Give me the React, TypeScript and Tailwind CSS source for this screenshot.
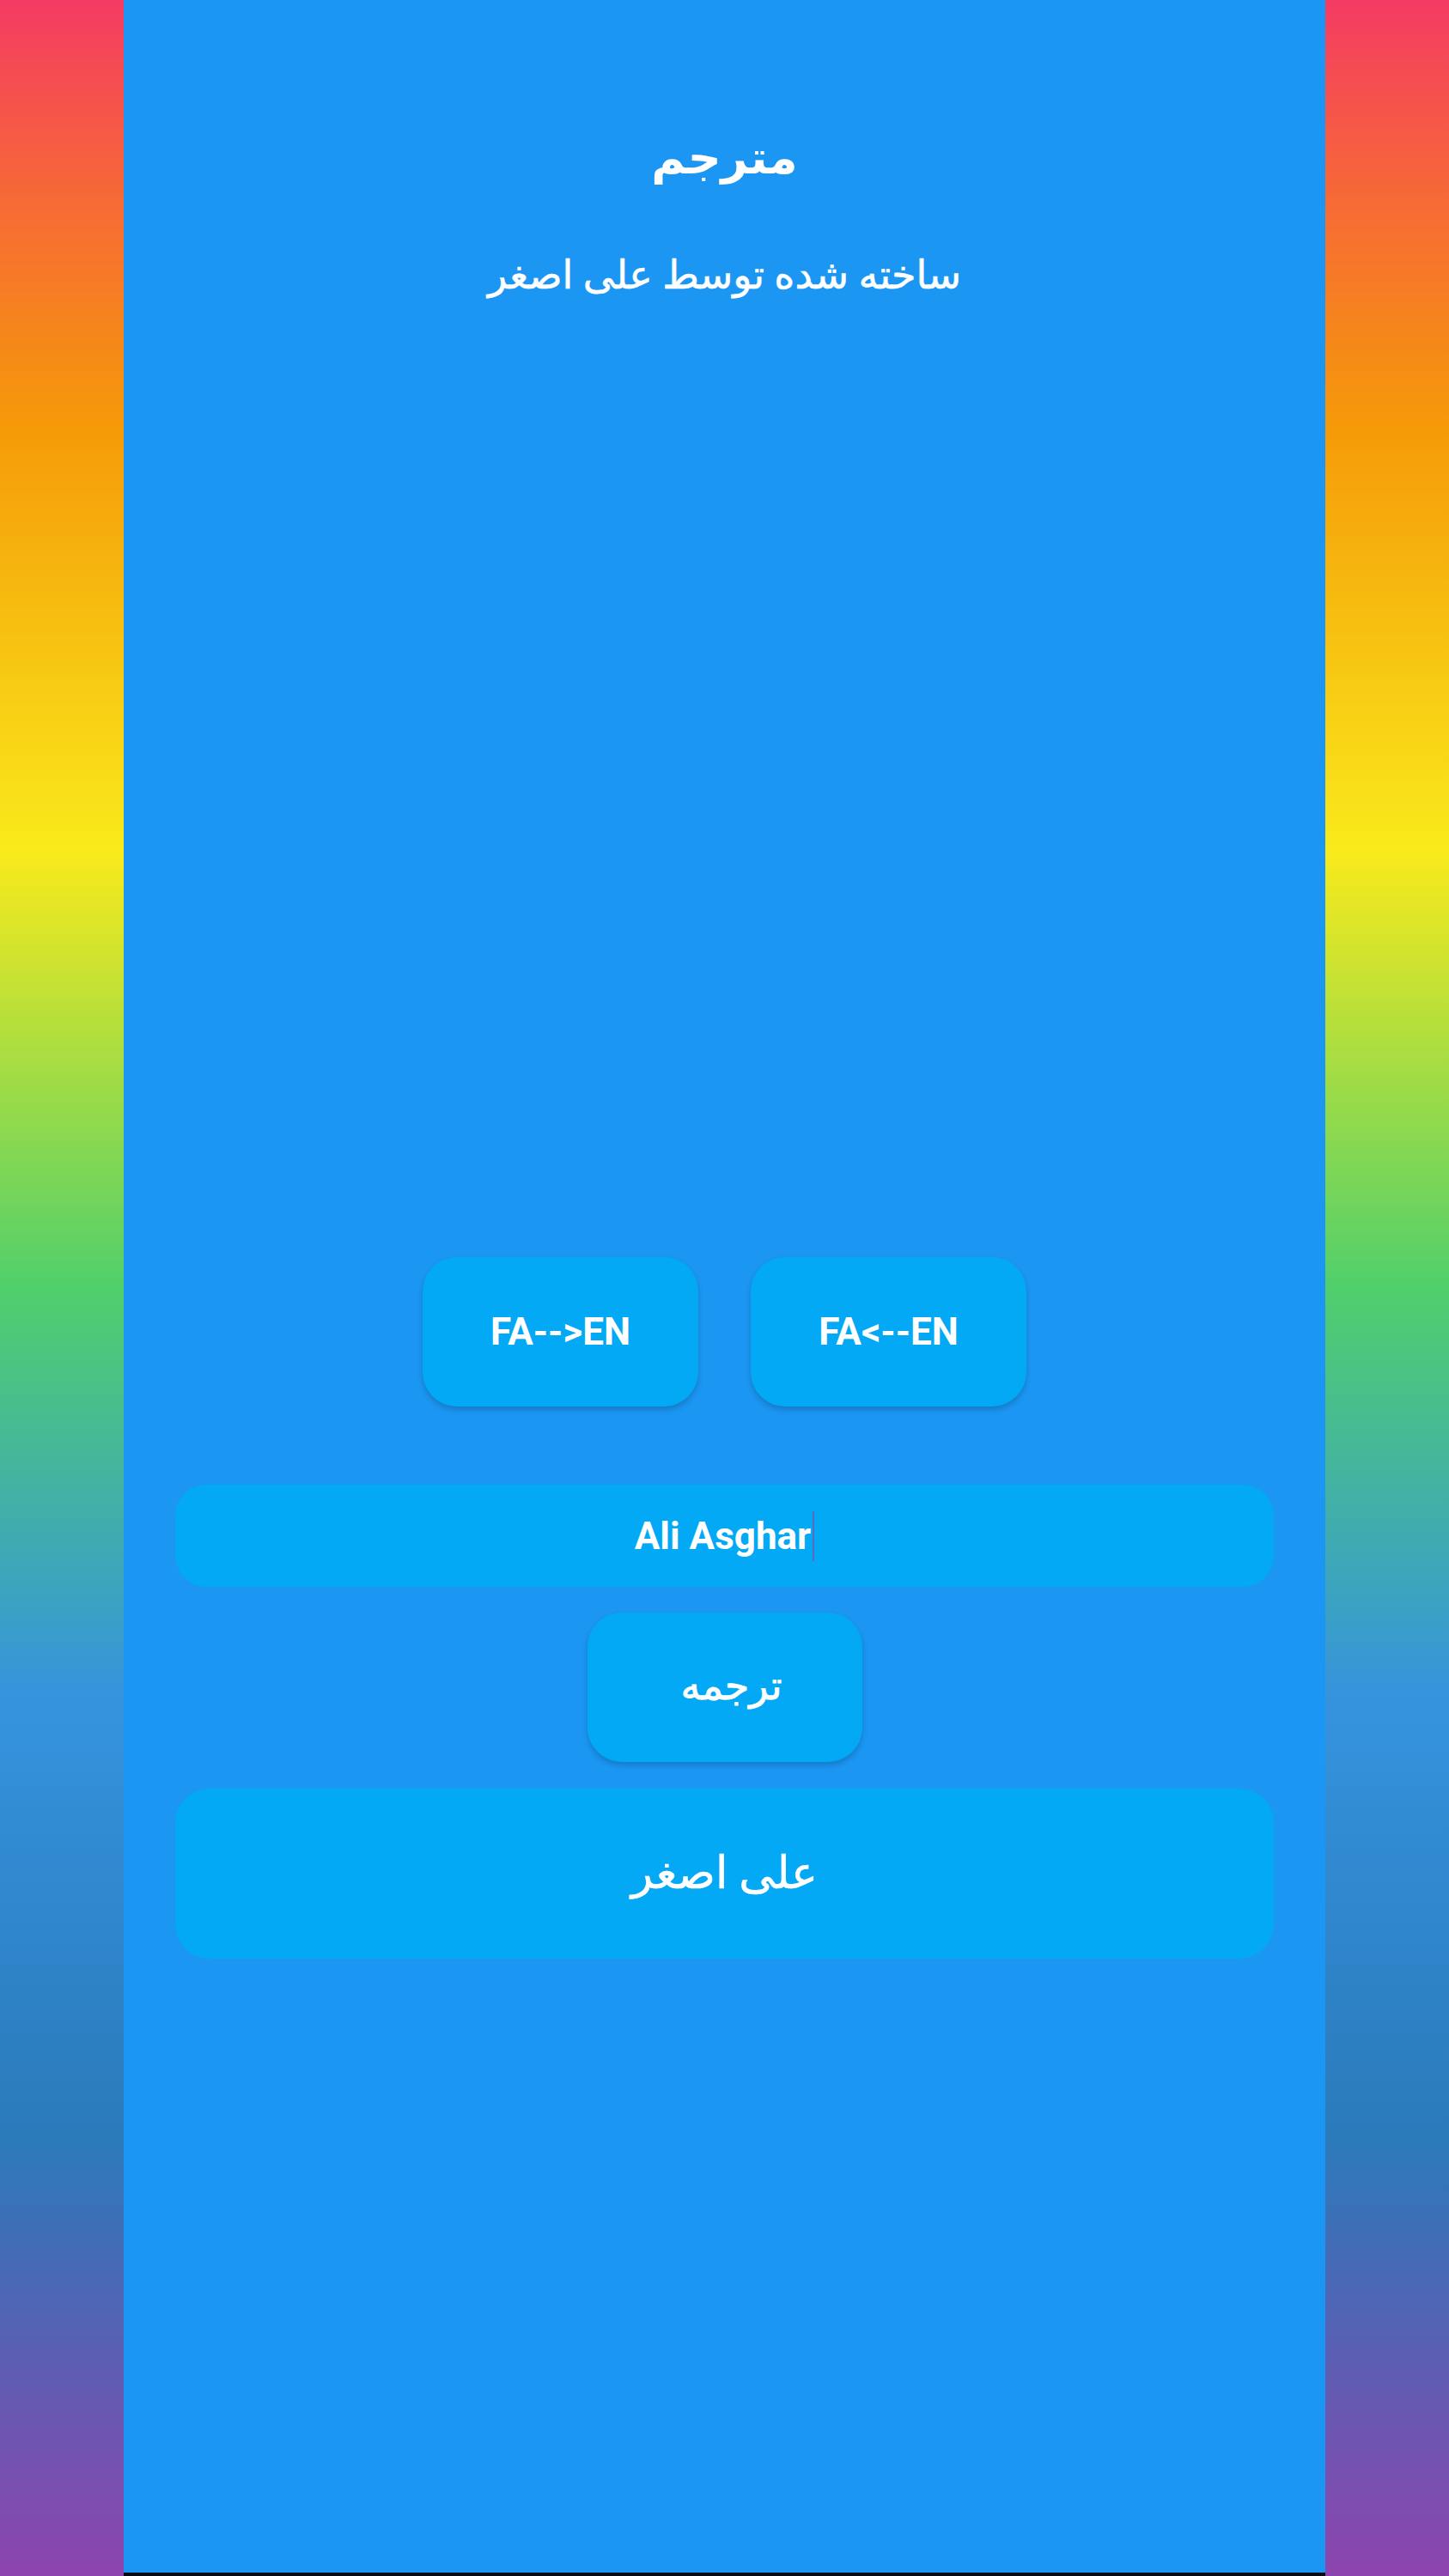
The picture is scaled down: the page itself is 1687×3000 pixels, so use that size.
import React from "react";

const stripGradient =
  "bg-[linear-gradient(to_bottom,#f43b63_0%,#f76b35_8%,#f59a08_16.6%,#f9ea1b_33%,#50cf6c_50%,#3593de_66%,#2a7aba_83%,#8e44ad_100%)]";

export default function App() {
  return (
    <div className="flex h-[3000px] w-full overflow-hidden font-['Roboto','DejaVu_Sans',sans-serif]">
      <div className="w-[144px] shrink-0 bg-[linear-gradient(to_bottom,#f43b63_0%,#f76b35_8%,#f59a08_16.6%,#f9ea1b_33%,#50cf6c_50%,#3593de_66%,#2a7aba_83%,#8e44ad_100%)]" />
      <div className="flex flex-1 flex-col items-center border-b-4 border-[#0a0a14] bg-[#1b96f3] text-white">
        <div dir="rtl" className="mt-[144px] h-[80px] text-[54px] font-bold leading-[80px]">
          مترجم
        </div>
        <div dir="rtl" className="h-[72px] mt-[60px] text-[46px] leading-[72px] [-webkit-text-stroke:0.6px_white]">
          ساخته شده توسط علی اصغر
        </div>
        <div className="mt-[1108px] flex gap-[61px]">
          <button className="flex h-[174px] w-[321px] items-center justify-center rounded-[40px] bg-[#03a9f4] text-[44px] font-bold shadow-[0_4px_6px_rgba(0,0,0,0.18)]">
            FA--&gt;EN
          </button>
          <button className="flex h-[174px] w-[321px] items-center justify-center rounded-[40px] bg-[#03a9f4] text-[44px] font-bold shadow-[0_4px_6px_rgba(0,0,0,0.18)]">
            FA&lt;--EN
          </button>
        </div>
        <div className="mt-[91px] flex h-[119px] w-[1279px] items-center justify-center rounded-[36px] bg-[#03a9f4]">
          <span className="text-[44px] font-bold leading-none">Ali Asghar</span>
          <span className="ml-[2px] h-[58px] w-[2px] bg-[#5c6bc0]" />
        </div>
        <button
          dir="rtl"
          className="mt-[30px] flex h-[174px] w-[320px] items-center justify-center rounded-[40px] bg-[#03a9f4] pb-[4px] pl-[16px] text-[46px] font-normal shadow-[0_4px_6px_rgba(0,0,0,0.18)] [-webkit-text-stroke:0.9px_white]"
        >
          ترجمه
        </button>
        <div
          dir="rtl"
          className="mt-[31px] flex h-[198px] w-[1279px] items-center justify-center rounded-[40px] bg-[#03a9f4] text-[52px] [-webkit-text-stroke:0.6px_white]"
        >
          علی اصغر
        </div>
      </div>
      <div className={`w-[144px] shrink-0 ${stripGradient}`} />
    </div>
  );
}
